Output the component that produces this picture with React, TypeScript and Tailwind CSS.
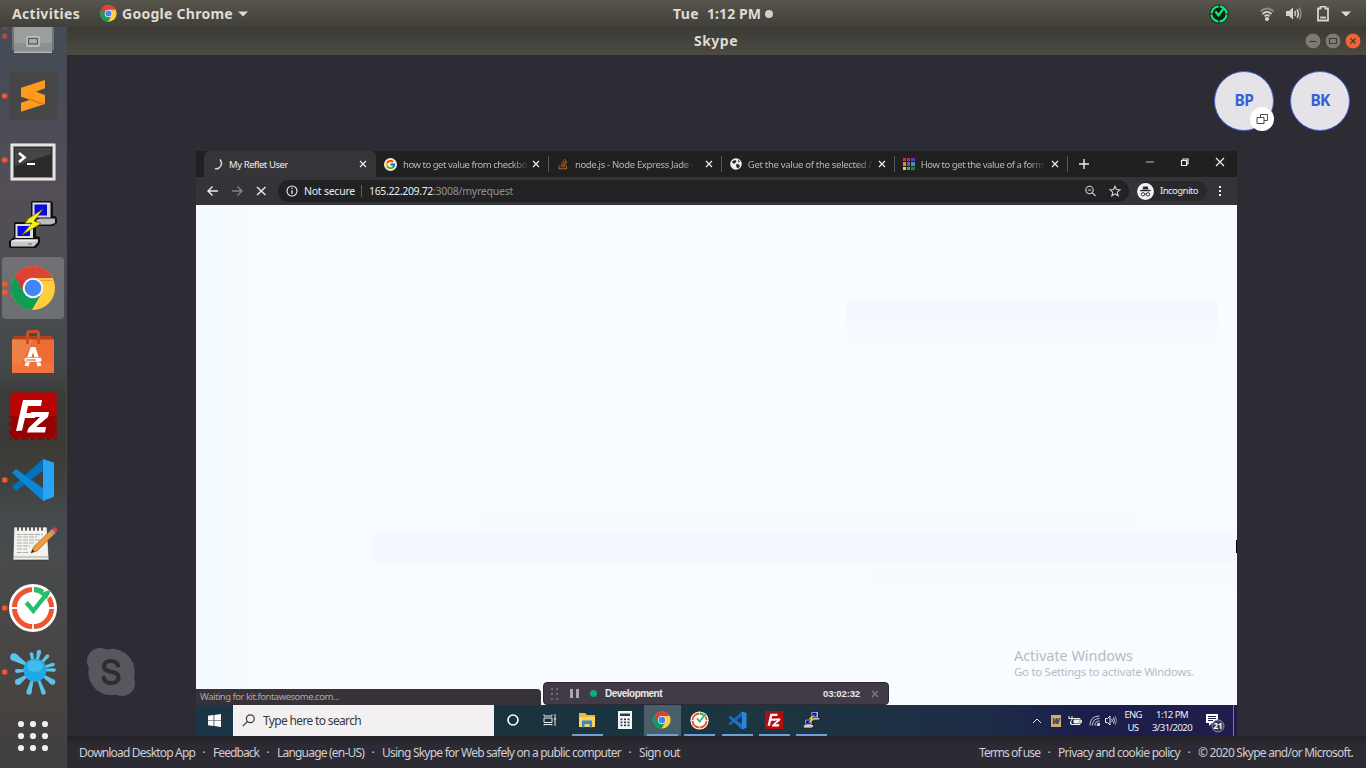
import { useLayoutEffect, useRef, useState } from "react";
import type { ReactNode } from "react";
import { FaStackOverflow } from "react-icons/fa";
import { FcGoogle } from "react-icons/fc";

/* A single line of text whose tracking is computed so that it fills a given width. */
function Label({ w, className = "", children }: { w: number; className?: string; children: string }) {
  const ref = useRef<HTMLSpanElement>(null);
  const [spacing, setSpacing] = useState(0);
  useLayoutEffect(() => {
    if (ref.current) {
      const natural = ref.current.getBoundingClientRect().width;
      setSpacing((w - natural) / children.length);
    }
  }, []);
  return (
    <span className={`block shrink-0 whitespace-pre ${className}`} style={{ width: w }}>
      <span ref={ref} style={{ letterSpacing: spacing }}>
        {children}
      </span>
    </span>
  );
}

function ChromeShapes() {
  return (
    <>
      <circle cx="33" cy="32" r="22" fill="#ffcd40" />
      <path d="M52.6 24.5A22 22 0 0 0 14.5 20L24.3 37L33 24.5Z" fill="#db4437" />
      <path d="M52.6 22A22 22 0 0 0 14.5 20L24.3 37L33 22Z" fill="#db4437" />
      <path d="M52.6 22L53.6 24.3H40L34 22Z" fill="#ffcd40" />
      <path d="M14.5 20A22 22 0 0 0 31.9 54L41.7 37L24.3 37Z" fill="#0f9d58" />
      <path d="M14.500 20L24.300 37L26 26Z" fill="#b8352a" opacity=".45" />
      <circle cx="33" cy="32" r="10.3" fill="#f4f6fa" />
      <circle cx="33" cy="32" r="8.3" fill="#4285f4" />
    </>
  );
}

function CodeShapes({ dark = false }: { dark?: boolean }) {
  return (
    <>
      <path d="M43 11L12 38.7L16 43L43 22.7Z" fill={dark ? "#1a63b5" : "#0272ba"} />
      <path d="M12 24.7L16 21L43 40.3V53Z" fill={dark ? "#1f6fc4" : "#0a87d6"} />
      <path d="M43 11L54 14.7V48.7L43 53Z" fill={dark ? "#2e85e0" : "#27a4f2"} />
    </>
  );
}

function TimerShapes() {
  return (
    <>
      <circle cx="33" cy="32" r="24" fill="#fff" />
      <circle cx="33" cy="32" r="18.6" fill="none" stroke="#ee5430" strokeWidth="5" />
      <path d="M33 13.4A18.6 18.6 0 0 1 44.5 17.5" fill="none" stroke="#27bd6c" strokeWidth="5" />
      <path d="M33 9V16M33 48V55M10 32H18M48 32H56" stroke="#fff" strokeWidth="1.8" />
      <path d="M26.3 26.5L33.3 34.5L49 15" fill="none" stroke="#fff" strokeWidth="8" />
      <path d="M26.3 26.5L33.3 34.8L48.4 15.8" fill="none" stroke="#27bd6c" strokeWidth="4.4" />
      <path d="M39 17.5L50.5 14L47 23" fill="#27bd6c" />
    </>
  );
}

function PuttyShapes() {
  return (
    <>
      <path d="M32 9H51L53 11V24H55L57 26V31L53 34H37L31 28V10Z" fill="#111" />
      <path d="M32.5 10.5H50.5V25.5H32.5Z" fill="#d8d8d8" />
      <path d="M34.5 12.5H47V23.5H34.5Z" fill="#0a0ae0" />
      <path d="M36 28L40 26.500H55V31L51 32.5H38Z" fill="#bdbdbd" />
      <path d="M15 30H34L36 32V44L40 45V51L36 56H10L9 55V49L14 45V31Z" fill="#111" />
      <path d="M15.5 32H33V46H15.5Z" fill="#dcdcdc" />
      <path d="M17.5 34H30V44H17.5Z" fill="#0a0ae0" />
      <path d="M11 49L15 47.500H38V50L34 54.5H11Z" fill="#c9c9c9" />
      <path d="M11 49L15 47.500H38L34.500 49.500H11Z" fill="#eee" />
      <path d="M28 52H32" stroke="#666" />
      <path d="M43 17L28 27L25 31.500L32 31L22 43L41 31.500L34 29Z" fill="#f5ef12" stroke="#6d6a00" strokeWidth=".7" />
    </>
  );
}

function Dots({ ys }: { ys: number[] }) {
  return (
    <>
      {ys.map((y) => (
        <circle key={y} cx="4.7" cy={y} r="2.8" fill="#ee5a2c" />
      ))}
    </>
  );
}

function DockItem({ children }: { children: ReactNode }) {
  return (
    <svg viewBox="0 0 66 64" className="block h-16 w-[66px] shrink-0">
      {children}
    </svg>
  );
}

/* Splash arms: tip x, tip y, tip radius. */
const arms: [number, number, number][] = [
  [14, 17, 3.8],
  [39, 12, 2.2],
  [31.5, 14, 1.8],
  [47.5, 16, 1.8],
  [53, 24.5, 1.8],
  [54, 30, 1.8],
  [52.5, 42, 2.8],
  [29, 52, 2.6],
  [18, 42, 3],
  [17, 31, 2],
  [43.5, 52.500, 2.2],
];

function Arm({ x, y, r }: { x: number; y: number; r: number }) {
  const dx = x - 35;
  const dy = y - 30;
  const n = Math.hypot(dx, dy);
  const px = -dy / n;
  const py = dx / n;
  const bx = 35 + (dx / n) * 10;
  const by = 30 + (dy / n) * 10;
  return (
    <g fill="#5cc3ea">
      <path d={`M${bx + px * 1.3} ${by + py * 1.3}L${x + px * r} ${y + py * r}L${x - px * r} ${y - py * r}L${bx - px * 1.3} ${by - py * 1.3}Z`} />
      <circle cx={x} cy={y} r={r} />
    </g>
  );
}

function Dock() {
  const teeth: [number, number][] = [];
  for (let i = 0; i < 6; i++) {
    const p = 13 + i * 8;
    teeth.push([p, 8.9], [p, 55.1], [9.9, p - 1], [56.1, p - 1]);
  }
  return (
    <aside className="h-full w-[67px] shrink-0 overflow-hidden border-r border-[#47494c] bg-[linear-gradient(180deg,#434c56_0%,#494c57_10%,#544e56_22%,#504e53_30%,#484b4e_40%,#434848_46%,#3b3c38_50%,#3b3a36_56%,#3f403e_61%,#454a4c_66%,#484b4d_70%,#494747_80%,#474442_90%,#403f3e_100%)]">
      <div className="-mt-[27px] flex flex-col">
        <DockItem>
          <path d="M12 20H54V50H12Z" fill="#6d7579" />
          <path d="M14 20H52V52.7H14Z" fill="#9b9e9f" />
          <path d="M14 43H52V52.7H14Z" fill="#8d9091" />
          <path d="M14 52.300H52" stroke="#c3c5c5" />
          <rect x="26" y="36" width="14" height="11" rx="2" fill="#b9bbbb" />
          <rect x="28.5" y="38.5" width="9" height="5.5" fill="#a9abab" stroke="#55595b" strokeWidth="1.2" />
          <circle cx="4.7" cy="36.3" r="2.8" fill="#a84e3c" />
          <circle cx="4.7" cy="28" r="2.8" fill="#74493f" />
        </DockItem>
        <DockItem>
          <rect x="9" y="8" width="48" height="48" rx="2" fill="#464646" />
          <path d="M21 23.700L45 16V24.300L36 27.700L45 31V40L21 47.700V38.700L30 35.700L21 32.700Z" fill="#ff9a1f" />
          <path d="M29 35.400L31 34.800L45 40L39.500 40Z" fill="#dc7f12" />
          <Dots ys={[32]} />
        </DockItem>
        <DockItem>
          <rect x="10.500" y="15.500" width="45" height="37" rx="1" fill="#e4e4e4" stroke="#a9a9a9" strokeWidth=".7" />
          <rect x="13.5" y="18.5" width="39" height="31" fill="#2a2c2b" stroke="#8a8a8a" />
          <path d="M15 20H51V26L15 38Z" fill="#565857" opacity=".6" />
          <path d="M19 25L24.5 29.500L19 34" fill="none" stroke="#fff" strokeWidth="2.6" />
          <path d="M27 36H35" stroke="#fff" strokeWidth="2" />
          <Dots ys={[32]} />
        </DockItem>
        <DockItem>
          <PuttyShapes />
        </DockItem>
        <DockItem>
          <rect x="2" y="1" width="62" height="62" rx="4" fill="#fff" opacity=".2" />
          <ChromeShapes />
          <Dots ys={[28, 36.3]} />
        </DockItem>
        <DockItem>
          <path d="M14 16H52L54 20H12Z" fill="#b2411d" />
          <rect x="12" y="19.500" width="42" height="33.5" fill="#ed6c34" />
          <path d="M12 19.500H33L22 43H12Z" fill="#ee9458" opacity=".5" />
          <path d="M12 43H54V53H12Z" fill="#f2743c" />
          <path d="M27.5 24V14Q27.5 11.500 30 11.500H36Q38.5 11.500 38.5 14V24" fill="none" stroke="#cf4e22" strokeWidth="3" />
          <path d="M26.500 46L32 29H34L39.500 46" fill="none" stroke="#fff" strokeWidth="4" />
          <rect x="24" y="37.500" width="18" height="4.600" rx="2.300" fill="#fff" stroke="#ed6c34" strokeWidth=".6" />
          <path d="M26 40H36" stroke="#ed6c34" strokeWidth="1.200" />
        </DockItem>
        <DockItem>
          <rect x="9" y="8" width="48" height="48" fill="#b90202" />
          <rect x="9" y="32" width="48" height="24" fill="#970202" />
          {teeth.map(([x, y], i) => (
            <circle key={i} cx={x} cy={y} r="1.500" fill="#3c3b38" />
          ))}
          <path d="M16 47L23 16H42L41 22H28L26.5 29H36L35 34H25L22 46.5Z" fill="#fff" />
          <path d="M31 28H49L48 33L36 43H46L45 48.5H27L28.5 44L40 33H31Z" fill="#fff" />
        </DockItem>
        <DockItem>
          <CodeShapes />
          <Dots ys={[32]} />
        </DockItem>
        <DockItem>
          <path d="M13 48L14 15H47L49 48Z" fill="#f2f2ef" stroke="#2d2d2d" strokeWidth=".6" />
          <path d="M14 45H48" stroke="#bcbcb8" strokeWidth="1.5" />
          {[18, 22, 26, 30, 34, 38, 42].map((x) => (
            <path key={x} d={`M${x} 13.500V18`} stroke="#444" strokeWidth="1.7" strokeLinecap="round" />
          ))}
          <path d="M17 22.5H43M17 25H37M17 28H41M17 31H35M17 34H30M17 37H27M17 40.5H28" stroke="#a5a5a5" strokeDasharray="5 1" strokeWidth=".9" />
          <path d="M31 41L33.5 35L50 19L54 22.5L37 39Z" fill="#f29b3a" stroke="#8b4d12" strokeWidth=".6" />
          <path d="M49 19.5L52 17L56 20.5L53.5 23Z" fill="#9b9b9b" />
          <path d="M52 17Q55 13.5 57 17Q58 19 55.5 21Z" fill="#e53b45" />
          <path d="M31 41L32.5 37.5L34.5 39.3Z" fill="#222" />
        </DockItem>
        <DockItem>
          <TimerShapes />
          <Dots ys={[32]} />
        </DockItem>
        <DockItem>
          {arms.map(([x, y, r]) => (
            <Arm key={`${x}-${y}`} x={x} y={y} r={r} />
          ))}
          <circle cx="35" cy="30" r="11.500" fill="#1eaae6" />
          <ellipse cx="35" cy="26" rx="8" ry="6" fill="#52c3ee" opacity=".7" />
          <Dots ys={[32]} />
        </DockItem>
        <DockItem>
          {[20, 32, 44].map((y) => [21, 33, 45].map((x) => <circle key={`${x}-${y}`} cx={x} cy={y} r="3.1" fill="#eeeeec" />))}
        </DockItem>
      </div>
    </aside>
  );
}

function TopBar() {
  return (
    <header className="grid h-[27px] shrink-0 grid-cols-[673px_1fr] bg-[linear-gradient(180deg,#58554c,#403f39)] font-['Noto_Sans',sans-serif] text-[14px] leading-[26px] font-bold text-[#dfdbd2]">
      <div className="flex items-center pl-3">
        <Label w={68}>Activities</Label>
        <svg viewBox="10 9 46 46" className="ml-5 size-[17px]">
          <ChromeShapes />
        </svg>
        <Label w={111} className="ml-[5px]">Google Chrome</Label>
        <svg viewBox="0 0 10 6" className="ml-[5px] h-[6px] w-[10px]">
          <path d="M0 .5H10L5 5.5Z" fill="#dfdbd2" />
        </svg>
      </div>
      <div className="flex items-center">
        <Label w={26}>Tue</Label>
        <Label w={54} className="ml-2">1:12 PM</Label>
        <span className="ml-[4px] size-2 rounded-full bg-[#d3d0c9]" />
        <svg viewBox="0 0 20 20" className="ml-[436px] size-5">
          <circle cx="10" cy="10" r="9.6" fill="#171b18" />
          <circle cx="10" cy="10" r="7.6" fill="none" stroke="#05f075" strokeWidth="2.200" strokeDasharray="10.7 1.24" strokeDashoffset="-.6" />
          <path d="M6.5 7.500L9.5 11.5L14.5 4.5" fill="none" stroke="#05f075" strokeWidth="2.200" />
        </svg>
        <svg viewBox="0 0 16 16" className="ml-[30px] size-4" fill="none" stroke="#d6d3cc" strokeWidth="1.8">
          <path d="M1.5 5.5Q8 -.5 14.5 5.5" stroke="#8f8c85" />
          <path d="M3.5 8Q8 3.700 12.5 8" />
          <path d="M5.5 10.300Q8 8 10.5 10.300" />
          <circle cx="8" cy="13" r="1.2" fill="#d6d3cc" />
        </svg>
        <svg viewBox="0 0 16 16" className="ml-[11px] size-4" fill="none" stroke="#d6d3cc" strokeWidth="1.6">
          <path d="M0 5H3L7 1.500V13.500L3 10H0Z" fill="#d6d3cc" stroke="none" />
          <path d="M8.8 5Q10.3 7.500 8.8 10M11 3.3Q13.6 7.500 11 11.7" />
          <path d="M13.2 1.7Q16.8 7.500 13.2 13.3" stroke="#8f8c85" />
        </svg>
        <svg viewBox="0 0 12 16" className="ml-[15px] h-4 w-3" fill="none" stroke="#d6d3cc" strokeWidth="1.8">
          <path d="M1 2.500H3.5V.500H8.5V2.500H11V14.500H1Z" />
          <path d="M3 11.500H9" />
        </svg>
        <svg viewBox="0 0 10 6" className="ml-3 h-[6px] w-[10px]">
          <path d="M0 .5H10L5 5.5Z" fill="#dfdbd2" />
        </svg>
      </div>
    </header>
  );
}

function TitleBar() {
  return (
    <div className="grid h-7 shrink-0 grid-cols-[627px_1fr_auto] items-center bg-[linear-gradient(180deg,#3b3a35,#4c4a43)] pr-[5px] font-['Noto_Sans',sans-serif] text-[14px] font-bold text-[#dfdbd2]">
      <span />
      <Label w={44} className="-mt-[2px]">Skype</Label>
      <div className="flex gap-1">
        {["M4.500 8.5H11.5", "M4.5 5.5H11.5V10.500H4.5Z", "M5.5 5.5L10.5 10.5M10.5 5.5L5.5 10.5"].map((d, i) => (
          <svg key={d} viewBox="0 0 16 16" className="size-4">
            <circle cx="8" cy="8" r="7.8" fill={i === 2 ? "#ef6535" : "#7d7b73"} stroke="#33322e" strokeWidth=".5" />
            <path d={d} fill="none" stroke="#393833" strokeWidth="1.1" />
          </svg>
        ))}
      </div>
    </div>
  );
}

function Favicon({ kind }: { kind: string }) {
  if (kind === "google")
    return (
      <span className="flex size-[13px] items-center justify-center rounded-full bg-[#ececee]">
        <FcGoogle className="size-[11px]" />
      </span>
    );
  if (kind === "stack") return <FaStackOverflow className="size-3 text-[#b5641d]" />;
  if (kind === "globe")
    return (
      <svg viewBox="0 0 12 12" className="size-3">
        <circle cx="6" cy="6" r="5.8" fill="#f0f0f0" />
        <path d="M2 3.5L5 2L6.5 3L5 5.5H3ZM6 6L9 6.5L10 8.5L7.5 10.5L6.5 9ZM8 1.5L10 3.5L8.5 4.5Z" fill="#242426" />
      </svg>
    );
  if (kind === "grid") {
    const colors = ["#e0242b", "#c117a8", "#7d25c9", "#e8891b", "#2c70cc", "#26a3a5", "#efd51f", "#4fb331", "#168b3c"];
    return (
      <span className="grid size-3 grid-cols-3 gap-px">
        {colors.map((c) => (
          <span key={c} style={{ backgroundColor: c }} />
        ))}
      </span>
    );
  }
  return (
    <svg viewBox="0 0 12 12" className="size-3" fill="none" stroke="#d9d9d9" strokeWidth="1.5">
      <path d="M8 1.5Q11.5 6.5 7 10Q5 11.3 3 10.5" />
    </svg>
  );
}

function Cross({ className }: { className: string }) {
  return (
    <svg viewBox="0 0 8 8" className={className} fill="none" stroke="currentColor" strokeWidth="1.2">
      <path d="M1 1L7 7M7 1L1 7" />
    </svg>
  );
}

const tabs = [
  { icon: "spin", text: "My Reflet User", w: 59 },
  { icon: "google", text: "how to get value from checkbo", w: 124 },
  { icon: "stack", text: "node.js - Node Express Jade - ", w: 121 },
  { icon: "globe", text: "Get the value of the selected /", w: 124 },
  { icon: "grid", text: "How to get the value of a form", w: 123 },
];

function BrowserChrome() {
  return (
    <div className="h-[54px] shrink-0 bg-[#343337] text-[#eeedee]">
      <div className="flex h-[26px] bg-[#202021] pl-2">
        {tabs.map((t, i) => (
          <div
            key={t.text}
            className={
              i === 0
                ? "flex w-[172px] items-center rounded-t-md bg-[#353438] pl-2"
                : "flex w-[172.9px] items-center pl-2"
            }
          >
            <Favicon kind={t.icon} />
            <Label
              w={t.w}
              className={
                i === 0
                  ? "ml-[5px] overflow-hidden text-[9.5px] leading-[13px] text-[#f0f0f0]"
                  : "ml-[6px] overflow-hidden text-[9.5px] leading-[13px] [mask-image:linear-gradient(90deg,#000_88%,transparent_102%)] text-[#b7b7b9]"
              }
            >
              {t.text}
            </Label>
            <span className="ml-auto" />
            <Cross className={i === 0 ? "mr-[9px] size-2" : "mr-2 size-2"} />
            <span className={i === 0 ? "hidden" : "h-4 w-px bg-[#58585a]"} />
          </div>
        ))}
        <div className="flex flex-1 items-center pl-[11px]">
          <svg viewBox="0 0 10 10" className="size-[10px]" stroke="currentColor" strokeWidth="1.4">
            <path d="M5 0V10M0 5H10" />
          </svg>
          <svg viewBox="0 0 80 10" className="mb-1 ml-[56px] h-[10px] w-20" fill="none" stroke="currentColor" strokeWidth="1.2">
            <path d="M1 5H9" stroke="#a5a5a7" />
            <path d="M36.5 3.5H41.5V8.5H36.5ZM38 3.5V2H43V7H41.5" />
            <path d="M71 1L79 9M79 1L71 9" />
          </svg>
        </div>
      </div>
      <div className="flex h-7 items-center pl-[11px]">
        <svg viewBox="0 0 60 12" className="h-3 w-[60px]" fill="none" stroke="currentColor" strokeWidth="1.4">
          <path d="M11 6H1M5.5 1.5L1 6L5.5 10.5" />
          <path d="M25 6H35M30.5 1.5L35 6L30.5 10.5" stroke="#838286" />
          <path d="M50 2L58.500 10M58.5 2L50 10" />
        </svg>
        <div className="ml-[11px] flex h-[22px] w-[851px] items-center rounded-full bg-[#222123] pl-2">
          <svg viewBox="0 0 12 12" className="size-3" fill="none" stroke="currentColor" strokeWidth="1.1">
            <circle cx="6" cy="6" r="5" />
            <path d="M6 5.3V9M6 2.8V4.1" strokeWidth="1.3" />
          </svg>
          <Label w={51} className="-mt-px ml-[6px] text-[10.5px] leading-4">Not secure</Label>
          <span className="mr-[7px] ml-[6px] h-3 w-px bg-[#5f5e62]" />
          <Label w={64} className="-mt-px text-[10.5px] leading-4">165.22.209.72</Label>
          <Label w={80} className="-mt-px text-[10.5px] leading-4 text-[#929194]">:3008/myrequest</Label>
          <svg viewBox="0 0 38 12" className="mr-[7px] ml-auto h-3 w-[38px]" fill="none" stroke="#d5d5d7" strokeWidth="1.1">
            <circle cx="5.500" cy="5" r="3.7" />
            <path d="M8.2 7.800L11.500 11M3.800 5H7.2" />
            <path d="M31 1.200L32.400 4.500L36 4.800L33.300 7.200L34.100 10.800L31 8.900L27.900 10.800L28.700 7.200L26 4.800L29.600 4.500Z" />
          </svg>
        </div>
        <div className="ml-[8px] flex h-5 w-[70px] items-center rounded-full bg-[#29282b]">
          <svg viewBox="0 0 17 17" className="size-[17px]" fill="none" stroke="#29282b">
            <circle cx="8.500" cy="8.500" r="8.400" fill="#f4f4f6" stroke="none" />
            <path d="M5.500 6.500L6.200 3.500H10.800L11.500 6.500Z" fill="#29282b" stroke="none" />
            <path d="M3.300 7.600H13.700" strokeWidth="1.300" />
            <circle cx="6" cy="11.300" r="1.700" strokeWidth=".9" />
            <circle cx="11" cy="11.300" r="1.700" strokeWidth=".9" />
            <path d="M7.500 11H9.500" />
          </svg>
          <Label w={38} className="ml-[6px] text-[9.5px] leading-4">Incognito</Label>
        </div>
        <span className="ml-3 flex flex-col gap-[2px]">
          <i className="size-[2px] bg-[#eee]" />
          <i className="size-[2px] bg-[#eee]" />
          <i className="size-[2px] bg-[#eee]" />
        </span>
      </div>
    </div>
  );
}

function PageArea() {
  return (
    <div className="relative h-[500px] shrink-0 overflow-hidden bg-[#f8fbff] bg-[linear-gradient(90deg,#f2faff_0,#f8fbff_60px)]">
      <div className="absolute top-[95px] left-[650px] h-[55px] w-[372px] bg-[linear-gradient(180deg,#f5f9ff_40%,#f8fbff)]" />
      <div className="absolute top-[302px] left-[284px] h-[50px] w-[660px] bg-[#f7faff]" />
      <div className="absolute top-[328px] left-[176px] h-[30px] w-[865px] bg-[#f5f9ff]" />
      <div className="absolute top-[358px] left-[674px] h-[22px] w-[367px] bg-[#f7faff]" />
      <div className="absolute top-[335px] right-0 h-[13px] w-px bg-black" />
      <div className="absolute top-[441px] left-[818px] text-[#b9bbc0]">
        <Label w={119} className="text-[14.5px] leading-[18px]">Activate Windows</Label>
        <Label w={180} className="text-[11.5px] leading-4">Go to Settings to activate Windows.</Label>
      </div>
      <div className="absolute bottom-0 left-0 flex h-4 w-[345px] items-center rounded-tr bg-[#363237] pl-1 text-[#aaa8ac]">
        <Label w={139} className="text-[9.5px] leading-4">Waiting for kit.fontawesome.com...</Label>
      </div>
      <div className="absolute bottom-0 left-[347px] flex h-[23px] w-[346px] items-center rounded border border-[#2d2a34] bg-[#403b47] pl-[7px] text-[#eae8ec]">
        <span className="grid grid-cols-2 gap-[3px]">
          {[0, 1, 2, 3, 4, 5].map((n) => (
            <i key={n} className="size-[2px] bg-[#6f6a76]" />
          ))}
        </span>
        <span className="ml-[12px] flex gap-[3px]">
          <i className="h-[9px] w-[3px] bg-[#aaa7af]" />
          <i className="h-[9px] w-[3px] bg-[#aaa7af]" />
        </span>
        <span className="ml-[11px] size-[7px] rounded-full bg-[#0cab78]" />
        <Label w={57} className="ml-[8px] font-['Liberation_Sans',sans-serif] text-[10px] leading-4 font-bold">Development</Label>
        <Label w={37} className="ml-auto font-['Liberation_Sans',sans-serif] text-[9.5px] leading-4 font-bold">03:02:32</Label>
        <Cross className="mr-[9px] ml-[11px] size-2 text-[#817c87]" />
      </div>
    </div>
  );
}

function TaskCell({ open = false, active = false, children }: { open?: boolean; active?: boolean; children: ReactNode }) {
  return (
    <div className={`flex w-[37.4px] flex-col items-center ${active ? "bg-[#49606a]" : ""}`}>
      <div className="flex h-[29px] items-center pt-px">{children}</div>
      <span className={open ? "h-[2px] w-[31px] bg-[#6f9fd4]" : "hidden"} />
    </div>
  );
}

function Taskbar() {
  return (
    <div className="flex h-[31px] shrink-0 bg-[linear-gradient(90deg,#1b3447_0%,#19343f_30%,#1c3540_55%,#1e2d46_75%,#1b1e4b_86%,#201d4c_100%)] text-[#f1f2f6]">
      <div className="flex w-[37px] items-center pl-3">
        <svg viewBox="0 0 14 14" className="size-[13px]" fill="#fff">
          <path d="M0 2L6 1.200V6.600H0ZM6.800 1.100L14 0V6.600H6.800ZM0 7.400H6V12.800L0 12ZM6.800 7.400H14V14L6.800 12.900Z" />
        </svg>
      </div>
      <div className="flex w-[261px] items-center bg-[#f3f0f2] pl-[9px] text-[#39373b]">
        <svg viewBox="0 0 13 13" className="size-[13px]" fill="none" stroke="currentColor" strokeWidth="1.200">
          <circle cx="8.300" cy="4.700" r="3.900" />
          <path d="M5.500 7.500L.8 12.200" />
        </svg>
        <Label w={98} className="ml-[8px] text-[12px] leading-4">Type here to search</Label>
      </div>
      <TaskCell>
        <svg viewBox="0 0 12 12" className="size-3"><circle cx="6" cy="6" r="5" fill="none" stroke="#fff" strokeWidth="1.600" /></svg>
      </TaskCell>
      <TaskCell>
        <svg viewBox="0 0 14 12" className="mr-px h-3 w-[14px]" fill="none" stroke="#e6ebee">
          <path d="M1 .5V2H9V.5M1 4H9V8.500H1ZM1 11.500V10.500H9V11.500M12 0V12M10.800 5H13.200" />
        </svg>
      </TaskCell>
      <TaskCell open>
        <svg viewBox="0 0 18 16" className="h-4 w-[18px]">
          <path d="M1 1H7L9 3H17V14H1Z" fill="#e9b83c" />
          <path d="M1 5H17V15H1Z" fill="#fad462" />
          <path d="M4 8.500H14V15.500H11.500V12H6.500V15.500H4Z" fill="#3788cf" />
        </svg>
      </TaskCell>
      <TaskCell>
        <svg viewBox="0 0 14 18" className="h-[18px] w-[14px]">
          <rect width="14" height="18" fill="#f4f6f7" />
          <path d="M2 2.500H12V5H2Z" fill="#23404b" />
          {[7.500, 10.500, 13.500].map((y) => [2.5, 6, 9.500].map((x) => <rect key={`${x}${y}`} x={x} y={y} width="2" height="1.700" fill="#23404b" />))}
        </svg>
      </TaskCell>
      <TaskCell open active>
        <svg viewBox="10 9 46 46" className="size-[18px]"><ChromeShapes /></svg>
      </TaskCell>
      <TaskCell open>
        <svg viewBox="8 7 50 50" className="size-[19px]"><TimerShapes /></svg>
      </TaskCell>
      <TaskCell open>
        <svg viewBox="11 10 44 44" className="size-[19px]"><CodeShapes dark /></svg>
      </TaskCell>
      <TaskCell open>
        <span className="flex size-[18px] items-center justify-center bg-[#b50d0e]">
          <svg viewBox="15 14 35 36" className="size-[14px]" fill="#fff">
            <path d="M16 47L23 16H42L41 22H28L26.500 29H36L35 34H25L22 46.500ZM31 28H49L48 33L36 43H46L45 48.500H27L28.500 44L40 33H31Z" />
          </svg>
        </span>
      </TaskCell>
      <TaskCell open>
        <svg viewBox="9 8 50 50" className="size-[18px]"><PuttyShapes /></svg>
      </TaskCell>
      <div className="ml-auto flex items-center text-[9.5px] leading-[13px]">
        <span className="flex w-5 justify-center">
          <svg viewBox="0 0 10 6" className="h-[6px] w-[10px]" fill="none" stroke="#eee"><path d="M1 5L5 1L9 5" /></svg>
        </span>
        <span className="flex w-[18px] justify-center">
          <span className="flex h-3 w-[10px] items-center justify-center bg-[#d2ab73] text-[8px] font-black text-[#37415d] italic">W</span>
        </span>
        <span className="flex w-5 justify-center">
          <svg viewBox="0 0 14 10" className="h-[10px] w-[14px]" fill="none" stroke="#eee"><path d="M4 2.500H12V8.500H3V6M12 4.500H13.500V6.500H12M1 0V2M4 0V2M.500 2.500H4V4L2.500 5.500V8" /><path d="M6 4H11V7H6Z" fill="#eee" /></svg>
        </span>
        <span className="flex w-[18px] justify-center">
          <svg viewBox="0 0 11 11" className="size-[11px]" fill="none" stroke="#c9cbd8"><path d="M1 10.500Q1 1 10.500 1M3.500 10.500Q3.500 3.500 10.500 3.500M6 10.500Q6 6 10.500 6" /><path d="M8 10.500Q8 8 10.500 8V10.500Z" fill="#eee" /></svg>
        </span>
        <span className="flex w-4 justify-center">
          <svg viewBox="0 0 12 11" className="h-[11px] w-3" fill="none" stroke="#eee"><path d="M.500 3.500H2.500L5 1V10L2.500 7.500H.500ZM6.800 4Q7.800 5.500 6.800 7M8.500 2.500Q10.300 5.500 8.500 8.500" /><path d="M10.200 1Q12.800 5.500 10.200 10" stroke="#999" /></svg>
        </span>
        <span className="flex w-7 flex-col items-center">
          <Label w={17}>ENG</Label>
          <Label w={11}>US</Label>
        </span>
        <span className="flex w-[50px] flex-col items-center">
          <Label w={32}>1:12 PM</Label>
          <Label w={40}>3/31/2020</Label>
        </span>
        <span className="flex w-9 justify-center">
          <svg viewBox="0 0 20 20" className="mt-1 size-5">
            <path d="M1 1H13V10H7L4 13V10H1Z" fill="#fff" />
            <path d="M3 3.500H11M3 5.500H11M3 7.500H8" stroke="#25254f" />
            <circle cx="13" cy="13" r="6" fill="#3a3b50" stroke="#8f90a3" />
            <text x="13" y="16" textAnchor="middle" fill="#fff" className="text-[8px] font-bold">21</text>
          </svg>
        </span>
        <span className="mr-[3px] h-[31px] w-px bg-[#77779a]" />
      </div>
    </div>
  );
}

function Footer() {
  return (
    <footer className="flex h-8 shrink-0 items-center justify-between bg-[linear-gradient(180deg,#222126_0,#2c2b33_10px)] pt-[2px] pr-[13px] pl-3 font-['Noto_Sans',sans-serif] text-[12px] leading-4 text-[#cfced3]">
      <div className="flex">
        <Label w={116}>Download Desktop App</Label>
        <span className="w-[18px] text-center">·</span>
        <Label w={46}>Feedback</Label>
        <span className="w-[18px] text-center">·</span>
        <Label w={87}>Language (en-US)</Label>
        <span className="w-[18px] text-center">·</span>
        <Label w={239}>Using Skype for Web safely on a public computer</Label>
        <span className="w-[18px] text-center">·</span>
        <Label w={41}>Sign out</Label>
      </div>
      <div className="flex">
        <Label w={61}>Terms of use</Label>
        <span className="w-[18px] text-center">·</span>
        <Label w={122}>Privacy and cookie policy</Label>
        <span className="w-[18px] text-center">·</span>
        <Label w={155}>© 2020 Skype and/or Microsoft.</Label>
      </div>
    </footer>
  );
}

function SkypeLogo() {
  return (
    <svg viewBox="0 0 48 48" className="size-12">
      <g fill="#58575e">
        <circle cx="24.500" cy="24" r="23.200" />
        <circle cx="13" cy="13" r="13" />
        <circle cx="35" cy="35" r="13" />
      </g>
      <path
        d="M31 17.500C30 13.800 27.500 13 24 13C20 13 17 15 17 18.200C17 26 31.500 21.500 31.500 29.200C31.500 33 28 35 24 35C20 35 17.500 33.500 16.800 29.800"
        fill="none"
        stroke="#2d2c35"
        strokeWidth="4.200"
        strokeLinecap="round"
      />
    </svg>
  );
}

export default function App() {
  return (
    <div className="flex h-[768px] w-[1366px] flex-col overflow-hidden bg-[#2d2c35]">
      <TopBar />
      <div className="flex min-h-0 flex-1">
        <Dock />
        <main className="flex min-w-0 flex-1 flex-col">
          <TitleBar />
          <div className="flex h-24 shrink-0 justify-end gap-4 pt-4 pr-4">
            {["BP", "BK"].map((name) => (
              <div key={name} className="relative flex size-[60px] items-center justify-center rounded-full border border-[#3c62d0] bg-[#e5e3e8] font-['Noto_Sans',sans-serif] text-[15.5px] font-bold text-[#3462d6]">
                <Label w={19}>{name}</Label>
                {name === "BP" && (
                  <span className="absolute -right-px -bottom-px flex size-6 items-center justify-center rounded-full bg-white">
                    <svg viewBox="0 0 12 12" className="size-3" fill="none" stroke="#4b4a50">
                      <path d="M1 4.500H8V10.500H1ZM4.500 4.500V1.500H11.500V7.500H8" />
                    </svg>
                  </span>
                )}
              </div>
            ))}
          </div>
          <div className="flex h-[585px] shrink-0">
            <div className="flex w-[129px] items-end pb-10 pl-5">
              <SkypeLogo />
            </div>
            <section className="flex w-[1041px] flex-col font-['Noto_Sans',sans-serif]">
              <BrowserChrome />
              <PageArea />
              <Taskbar />
            </section>
          </div>
          <Footer />
        </main>
      </div>
    </div>
  );
}
